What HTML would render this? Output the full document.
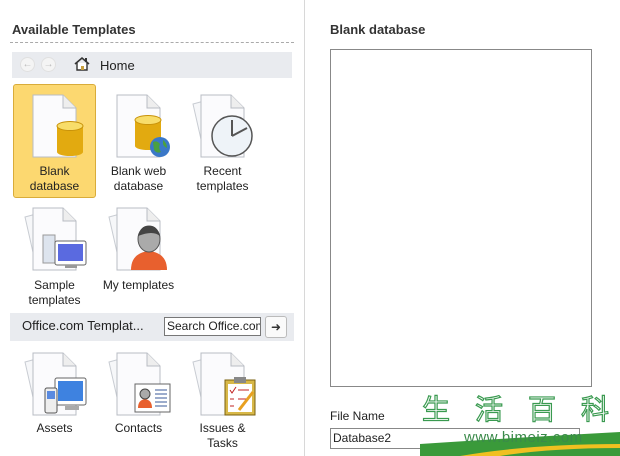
<!DOCTYPE html>
<html><head><meta charset="utf-8"><style>
*{margin:0;padding:0;box-sizing:border-box}
body{width:620px;height:456px;background:#fff;font-family:"Liberation Sans","DejaVu Sans",sans-serif;position:relative;overflow:hidden;color:#222}
.a{position:absolute}
.lbl{position:absolute;width:83px;text-align:center;font-size:12px;line-height:15px;color:#222}
svg{position:absolute}
</style></head><body>
<div class="a" style="left:12px;top:22px;font-size:13px;font-weight:bold;color:#333">Available Templates</div>
<div class="a" style="left:10px;top:42px;width:284px;border-top:1px dashed #aaa"></div>
<div class="a" style="left:12px;top:52px;width:280px;height:26px;background:#e9ebef"></div>
<div class="a" style="left:20px;top:57px;width:15px;height:15px;border-radius:50%;background:#f4f4f4;border:1px solid #e0e0e0;font-size:10px;color:#bbb;text-align:center;line-height:13px">&#8592;</div>
<div class="a" style="left:41px;top:57px;width:15px;height:15px;border-radius:50%;background:#f4f4f4;border:1px solid #e0e0e0;font-size:10px;color:#bbb;text-align:center;line-height:13px">&#8594;</div>
<svg style="left:74px;top:56px" width="16" height="16" viewBox="0 0 16 16"><path d="M1 8 L8 2 L15 8" fill="none" stroke="#333" stroke-width="1.6"/><path d="M3 7 V14 H13 V7" fill="#fff" stroke="#333" stroke-width="1.4"/><rect x="7" y="10" width="3" height="4" fill="#c8a040"/><rect x="11" y="2" width="2" height="4" fill="#333"/></svg>
<div class="a" style="left:100px;top:58px;font-size:13px;color:#222">Home</div>

<div class="a" style="left:13px;top:84px;width:83px;height:114px;background:#fcd870;border:1px solid #d9ac3a;border-radius:3px"></div>

<!-- Row1 -->
<svg style="left:13px;top:90px" width="83" height="72" viewBox="0 0 83 72"><path d="M20 5H50L63 18V67H20Z" fill="#fbfbfd" stroke="#b8bcc4"/><path d="M50 5V18H63" fill="#eee" stroke="#b8bcc4"/><path d="M44 36V62A13 4 0 0 0 70 62V36Z" fill="#e2aa10"/><ellipse cx="57" cy="36" rx="13" ry="4.5" fill="#f8dd6a" stroke="#c8920a"/></svg>
<div class="lbl" style="left:13px;top:164px">Blank<br>database</div>
<svg style="left:97px;top:90px" width="83" height="72" viewBox="0 0 83 72"><path d="M20 5H50L63 18V67H20Z" fill="#fbfbfd" stroke="#b8bcc4"/><path d="M50 5V18H63" fill="#eee" stroke="#b8bcc4"/><path d="M38 30V56A13 4 0 0 0 64 56V30Z" fill="#e2aa10"/><ellipse cx="51" cy="30" rx="13" ry="4.5" fill="#f8dd6a" stroke="#c8920a"/><circle cx="63" cy="57" r="10" fill="#3a78c8"/><path d="M56 52 Q60 50 63 54 Q61 58 64 62 Q60 64 57 60Z M66 50 Q70 53 70 58 Q67 57 66 54Z" fill="#4aa040"/></svg>
<div class="lbl" style="left:97px;top:164px">Blank web<br>database</div>
<svg style="left:181px;top:90px" width="83" height="72" viewBox="0 0 83 72"><path d="M12 14L38 7L50 60L24 67Z" fill="#f6f7f9" stroke="#c8ccd2"/><path d="M20 5H50L63 18V67H20Z" fill="#fbfbfd" stroke="#b8bcc4"/><path d="M50 5V18H63" fill="#eee" stroke="#b8bcc4"/><circle cx="51" cy="46" r="20" fill="#eef3f8" stroke="#555" stroke-width="1.5"/><path d="M51 46V30M51 46L66 38" stroke="#555" stroke-width="2" fill="none"/></svg>
<div class="lbl" style="left:181px;top:164px">Recent<br>templates</div>

<!-- Row2 -->
<svg style="left:13px;top:203px" width="83" height="72" viewBox="0 0 83 72"><path d="M12 14L38 7L50 60L24 67Z" fill="#f6f7f9" stroke="#c8ccd2"/><path d="M20 5H50L63 18V67H20Z" fill="#fbfbfd" stroke="#b8bcc4"/><path d="M50 5V18H63" fill="#eee" stroke="#b8bcc4"/><rect x="30" y="32" width="12" height="28" fill="#dde4ee" stroke="#999"/><rect x="42" y="38" width="31" height="24" rx="2" fill="#fff" stroke="#666"/><rect x="45" y="41" width="25" height="17" fill="#5a6ae0"/><rect x="52" y="62" width="12" height="3" fill="#999"/></svg>
<div class="lbl" style="left:13px;top:278px">Sample<br>templates</div>
<svg style="left:97px;top:203px" width="83" height="72" viewBox="0 0 83 72"><path d="M12 14L38 7L50 60L24 67Z" fill="#f6f7f9" stroke="#c8ccd2"/><path d="M20 5H50L63 18V67H20Z" fill="#fbfbfd" stroke="#b8bcc4"/><path d="M50 5V18H63" fill="#eee" stroke="#b8bcc4"/><path d="M34 67Q34 50 52 48Q70 50 70 67Z" fill="#e8602e"/><ellipse cx="52" cy="36" rx="11" ry="13" fill="#aaa" stroke="#555"/><path d="M41 33Q44 22 52 23Q60 22 63 33Q56 27 41 33Z" fill="#444"/></svg>
<div class="lbl" style="left:97px;top:278px">My templates</div>

<div class="a" style="left:10px;top:313px;width:284px;height:28px;background:#e9ebef"></div>
<div class="a" style="left:22px;top:318px;font-size:13px;color:#222">Office.com Templat...</div>
<div class="a" style="left:164px;top:317px;width:97px;height:19px;border:1px solid #777;background:#fff;font-size:12px;line-height:17px;padding-left:2px;overflow:hidden;white-space:nowrap">Search Office.com</div>
<div class="a" style="left:265px;top:316px;width:22px;height:22px;border:1px solid #bbb;border-radius:3px;background:#fafafa;font-size:12px;text-align:center;line-height:20px;color:#333">&#10140;</div>

<!-- Row3 -->
<svg style="left:13px;top:348px" width="83" height="72" viewBox="0 0 83 72"><path d="M12 14L38 7L50 60L24 67Z" fill="#f6f7f9" stroke="#c8ccd2"/><path d="M20 5H50L63 18V67H20Z" fill="#fbfbfd" stroke="#b8bcc4"/><path d="M50 5V18H63" fill="#eee" stroke="#b8bcc4"/><rect x="42" y="30" width="31" height="27" rx="2" fill="#fff" stroke="#666"/><rect x="45" y="33" width="25" height="20" fill="#3e82e0"/><rect x="52" y="58" width="14" height="4" fill="#aaa"/><rect x="32" y="40" width="12" height="25" rx="2" fill="#eee" stroke="#555"/><rect x="34" y="43" width="8" height="8" fill="#5a8ae0"/></svg>
<div class="lbl" style="left:13px;top:421px">Assets</div>
<svg style="left:97px;top:348px" width="83" height="72" viewBox="0 0 83 72"><path d="M12 14L38 7L50 60L24 67Z" fill="#f6f7f9" stroke="#c8ccd2"/><path d="M20 5H50L63 18V67H20Z" fill="#fbfbfd" stroke="#b8bcc4"/><path d="M50 5V18H63" fill="#eee" stroke="#b8bcc4"/><rect x="38" y="36" width="35" height="28" fill="#fff" stroke="#666"/><path d="M41 60Q41 52 48 51Q55 52 55 60Z" fill="#e8602e"/><circle cx="48" cy="46" r="5" fill="#aaa" stroke="#444"/><path d="M58 42H70M58 46H70M58 50H70M58 54H70M58 58H70" stroke="#3a5a9a"/></svg>
<div class="lbl" style="left:97px;top:421px">Contacts</div>
<svg style="left:181px;top:348px" width="83" height="72" viewBox="0 0 83 72"><path d="M12 14L38 7L50 60L24 67Z" fill="#f6f7f9" stroke="#c8ccd2"/><path d="M20 5H50L63 18V67H20Z" fill="#fbfbfd" stroke="#b8bcc4"/><path d="M50 5V18H63" fill="#eee" stroke="#b8bcc4"/><rect x="44" y="32" width="30" height="35" fill="#d8b848" stroke="#7a6010"/><rect x="47" y="36" width="24" height="28" fill="#fff"/><rect x="53" y="29" width="12" height="6" fill="#888"/><path d="M49 42L51 45L55 39M49 51H53M49 58H53M57 42H68M57 51H68" stroke="#c02020" fill="none"/><path d="M58 62L72 44" stroke="#e8a020" stroke-width="3"/></svg>
<div class="lbl" style="left:181px;top:421px">Issues &amp;<br>Tasks</div>

<div class="a" style="left:304px;top:0;width:1px;height:456px;background:#d8d8d8"></div>
<div class="a" style="left:330px;top:22px;font-size:13px;font-weight:bold;color:#333">Blank database</div>
<div class="a" style="left:330px;top:49px;width:262px;height:338px;border:1px solid #888;background:#fff"></div>
<div class="a" style="left:330px;top:409px;font-size:12px;color:#222">File Name</div>
<div class="a" style="left:330px;top:428px;width:250px;height:21px;border:1px solid #888;background:#fff;font-size:12px;line-height:19px;padding-left:2px">Database2</div>
<svg style="left:420px;top:430px" width="200" height="26" viewBox="0 0 200 26"><path d="M0 14Q90 8 200 2V26H0Z" fill="#3a9a3a"/><path d="M40 26Q110 14 200 14V18Q130 18 80 26Z" fill="#f0c020"/></svg>
<div class="a" style="left:422px;top:390px;white-space:nowrap;font-family:'Noto Sans CJK SC',sans-serif;font-size:28px;letter-spacing:25px;color:#fff;-webkit-text-stroke:1.2px #3a9a50;line-height:36px">生活百科</div>
<div class="a" style="left:464px;top:429px;font-size:15px;color:#3a8a4a;letter-spacing:0.5px;white-space:nowrap">www.bimeiz.com</div>
</body></html>
